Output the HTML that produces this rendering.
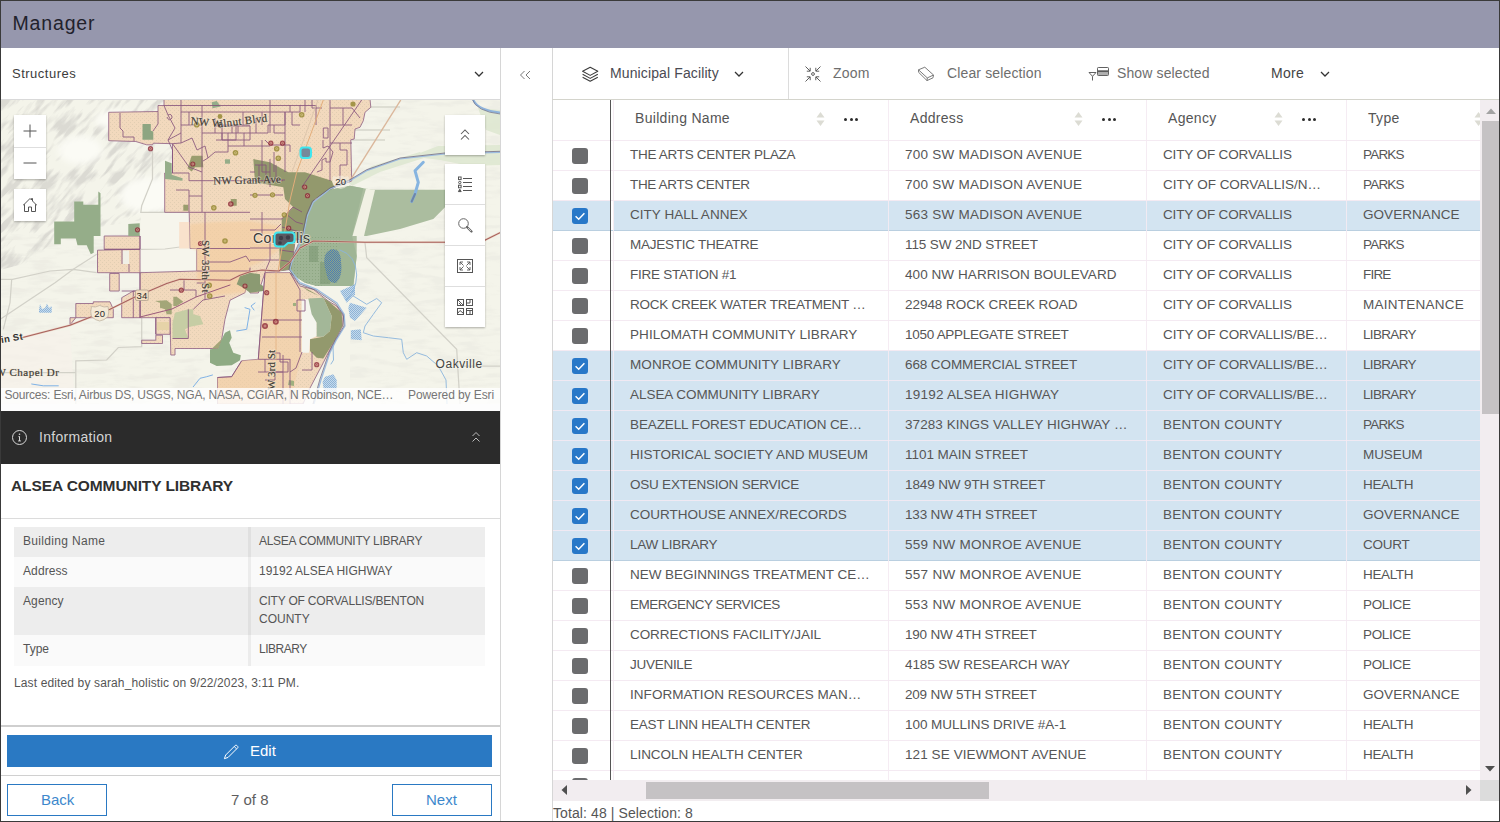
<!DOCTYPE html>
<html><head><meta charset="utf-8"><title>Manager</title>
<style>
*{box-sizing:border-box;margin:0;padding:0}
html,body{width:1500px;height:822px;overflow:hidden;background:#fff}
body{font-family:"Liberation Sans",sans-serif;color:#555;position:relative}
.abs{position:absolute}
.t{position:absolute;white-space:nowrap;line-height:1}
/* header */
#hdr{left:0;top:0;width:1500px;height:48px;background:#9697ad}
/* frame */
#frame{left:0;top:0;width:1500px;height:822px;border:1px solid #3a3a3a;z-index:50;pointer-events:none}
/* table */
#tbl{left:553px;top:100px;width:927px;height:680px;overflow:hidden}
.row{position:absolute;left:553px;width:927px;height:30px;border-bottom:1px solid #f4eaf2}
.row i{position:absolute;top:0;height:29px;display:block}
.row.sel .f1{left:0;width:57px;background:#d3e4f1}
.row.sel .f2{left:58px;width:869px;background:#d3e4f1}
.row.sel.gap .f2{left:61px;width:866px}
.row.sel{border-bottom-color:#f0e9f3}
.row.sel.last{border-bottom-color:#bacfe0}
.cb{position:absolute;left:19px;top:7px;width:16px;height:16px;border-radius:3px;background:#6b6c6e}
.cb.on{background:#2878c8}
.cb svg{position:absolute;left:0;top:0}
.c{position:absolute;top:6px;font-size:13.5px;letter-spacing:-0.27px;line-height:15px;white-space:nowrap;color:#565656}
.c1{left:77px}.c2{left:352px}.c3{left:610px}.c4{left:810px}
.vl{position:absolute;top:100px;width:1px;height:680px;background:#f4eaf2;opacity:0.9}
.hd{position:absolute;top:110px;font-size:14px;line-height:16px;color:#555;white-space:nowrap;letter-spacing:0.3px}
.dots{position:absolute;top:118px;width:14px;height:3px}
.dots b{position:absolute;top:0;width:3px;height:3px;border-radius:50%;background:#2b2b2b}
.sort{position:absolute;top:111px;width:9px;height:16px}
.wbox{background:#fff;box-shadow:0 1px 2px rgba(0,0,0,0.3)}
.tb{position:absolute;top:65px;font-size:14px;line-height:16px;white-space:nowrap}
</style></head>
<body>
<div id="hdr" class="abs"></div>
<div class="t" style="left:12.5px;top:14px;font-size:19.5px;letter-spacing:0.85px;color:#22222c">Manager</div>

<!-- LEFT PANEL -->
<div class="t" style="left:12px;top:67px;font-size:13px;letter-spacing:0.5px;color:#3c3c3c">Structures</div>
<svg class="abs" style="left:473px;top:68px" width="12" height="12" viewBox="0 0 12 12"><path d="M2 4 L6 8 L10 4" fill="none" stroke="#333" stroke-width="1.25"/></svg>
<div class="abs" style="left:1px;top:99px;width:499px;height:1px;background:#d9d9d9"></div>
<svg width="499" height="304" viewBox="1 100 499 304" style="position:absolute;left:1px;top:100px;overflow:hidden">
<defs>
<filter id="blur3" x="-20%" y="-20%" width="140%" height="140%"><feGaussianBlur stdDeviation="3"/></filter>
<filter id="blur05" x="-50%" y="-50%" width="200%" height="200%"><feGaussianBlur stdDeviation="0.5"/></filter>
<filter id="blur1" x="-20%" y="-20%" width="140%" height="140%"><feGaussianBlur stdDeviation="1.2"/></filter>
<filter id="hill" x="0" y="0" width="100%" height="100%"><feTurbulence type="fractalNoise" baseFrequency="0.035 0.16" numOctaves="3" seed="4" result="n"/><feColorMatrix in="n" type="matrix" values="0 0 0 0 0.60  0 0 0 0 0.59  0 0 0 0 0.56  4.5 0 0 0 -2.05"/></filter>
<pattern id="dots" width="4" height="4" patternUnits="userSpaceOnUse"><rect x="0" y="0" width="1" height="1" fill="#b3ae92" opacity="0.26"/><rect x="2" y="2" width="1" height="1" fill="#b3ae92" opacity="0.26"/></pattern>
<pattern id="hatch" width="2" height="2" patternUnits="userSpaceOnUse"><rect width="2" height="2" fill="#b5d2ee"/><rect width="1" height="1" fill="#6f9fd0"/><rect x="1" y="1" width="1" height="1" fill="#6f9fd0"/></pattern>
<pattern id="hatch2" width="2" height="2" patternUnits="userSpaceOnUse"><rect width="2" height="2" fill="#8aa58a"/><rect width="1" height="1" fill="#4f7db4"/><rect x="1" y="1" width="1" height="1" fill="#4f7db4"/></pattern>
<pattern id="gdots" width="3" height="3" patternUnits="userSpaceOnUse"><rect width="1" height="1" fill="#7d9873" opacity="0.55"/></pattern>
<clipPath id="hillclip"><path d="M0 99 H200 V150 L175 215 L110 225 L60 235 L30 262 L0 270 Z"/></clipPath>
<g id="pp">
<path d="M108.700 112.300 L158 111.500 L158 105.500 L164 105.500 L164 99 L370 99 L370.800 107.300 L365 112.300 L363.300 120.700 L360 127.300 L355 129 L354.200 139 L350.800 139.800 L351.700 181 L335 187 L313 202 L307 216 L303 236 L295 241 L291.700 269.300 L265 272.700 L258.300 293 L250 293 L250 267.700 L245 292.700 L230 300.200 L225 319.300 L221.700 339.300 L218.300 348.500 L175 348.500 L175 355 L170.800 355 L170 317.700 L140 317.700 L140 272.700 L196.700 271 L196.700 248.500 L190 248.500 L189.200 212.300 L164.700 212.300 L164.700 173 L172.500 173 L172.500 143.700 L153.300 143.200 L152.500 144.800 L146.700 144.800 L135.800 141.500 L108.700 140.700 Z"/>
<path d="M104.200 236 H140 V249.300 H104.200 Z"/>
<path d="M97.500 250.200 L140 249.300 V272.700 H97.500 Z"/>
<path d="M109.700 273.500 H119.200 V291 H109.700 Z"/>
<path d="M121.700 297.700 L133.300 291 H140 V317.700 H121.700 Z"/>
<path d="M75.800 303.500 L93.300 303.500 L93.300 301.800 L110 301.800 L113.300 309.300 L113.300 317.700 L75.800 317.700 L70 325 L70 317.700 L75.800 317.700 Z"/>
<path d="M155.800 317.700 H170 V334.300 H155.800 Z"/>
<path d="M141.700 340.200 H155.800 V335.200 H162.500 V343.500 H141.700 Z"/>
<path d="M217.500 404 L217.500 377.500 L231.700 376.700 L241.700 360.800 L258.300 359.300 L265 272.700 L290 272.700 L300 286 L313.300 289.300 L328.300 301 L336.700 306 L343.300 316 L342.500 326 L333.300 342.700 L323.300 362.700 L310 388 L303 404 Z"/>
</g>
</defs>
<rect x="0" y="99" width="501" height="306" fill="#f4f4ea"/>
<!-- hillshade -->
<g id="hills">
<g clip-path="url(#hillclip)"><g transform="rotate(-48 90 160)"><rect x="-80" y="20" width="340" height="280" filter="url(#hill)" opacity="0.62"/></g></g>
<rect x="350" y="99" width="150" height="305" filter="url(#hill)" opacity="0.12"/>
<rect x="0" y="234" width="260" height="170" filter="url(#hill)" opacity="0.14"/>
<g filter="url(#blur3)" fill="#fbfbf5"><ellipse cx="80" cy="150" rx="22" ry="14"/><ellipse cx="150" cy="195" rx="30" ry="18"/><ellipse cx="115" cy="120" rx="20" ry="10"/></g>
</g>
<!-- pale areas -->
<path d="M140.800 212.300 H189.200 V236 H179 V249 H196 V271 H140.800 Z" fill="#f6f5ec"/>
<path d="M0 335 L70 330 L75 404 L0 404 Z" fill="#f6f1ea" opacity="0.7"/>
<!-- riparian pale green -->
<g fill="#dfe8d2" opacity="0.9">
<path d="M420 153 L438 146 L500 145 L500 165 L470 166 L440 160 L424 158 Z"/>
<path d="M478 108 L500 110 L500 135 L486 130 Z"/>
<path d="M372 166 L420 152 L424 158 L380 172 L352 186 L348 182 Z"/>
</g>
<!-- gray minor roads -->
<g fill="none" stroke="#d2d1c8" stroke-width="1.25">
<path d="M0 319.300 L25 302.700 L55 282.700 L73.300 269.300 L96.700 254.300"/>
<path d="M0 279.300 L12.500 279.300 L50 271 L73.300 269.300 L96.700 272.700"/>
<path d="M11.700 279.300 L10 302.700 L3.300 329.300"/>
<path d="M75.800 404 L75.800 360.800 L106.700 360 L118.300 347.500 L141.700 346.700 V272"/>
<path d="M0 372.700 H75.800"/>
<path d="M152.500 149 L152.500 179 L141.700 205.700 L140.800 212.300 H189"/>
<path d="M140.800 249.300 L165 249 L180 247"/>
<path d="M365 242.700 L366.700 257.700 L456.700 349.300 L460 404"/>
<path d="M460 366 H500"/>
<path d="M362 107 H400 M352 130 H390 M352 140 H385" stroke="#d6d6cc" stroke-width="1.5"/>
</g>
<!-- PEACH city -->
<use href="#pp" fill="#f2d9bd" stroke="#8d5c82" stroke-width="0.8" stroke-linejoin="round"/>
<use href="#pp" fill="url(#dots)"/>
<!-- lighter / darker peach -->
<path d="M179.200 222 H189.200 V248.500 H179.200 Z" fill="#f9e2cc"/>
<path d="M190 224 L215 222 L250 221 L280 226 L279 250 L262 262 L250 266 L246 292 L210 296 L197 280 L197 250 L190 248 Z" fill="#f4cd9f" opacity="0.62" filter="url(#blur1)"/>
<path d="M258.300 359.300 L265 272.700 L290 272.700 L300 286 L302 352 L290 404 L217.500 404 L217.500 377.500 L231.700 376.700 L241.700 360.800 Z" fill="#f3cea4" opacity="0.55"/>
<!-- white notches in peach -->
<path d="M122.500 250.500 H129 V264 H122.500 Z" fill="#f1f0e6"/>
<path d="M305 299.300 L311.700 299.300 L316.700 322.700 L316.700 336 L310 339.300 L309.200 352.700 L301.700 352.700 L301.700 299.300 Z" fill="#f5f5ee"/>
<path d="M250 293 L262.500 292.700 L260 359.300 L250 359.300 L241.700 360.800 L231.700 376.700 L217.500 377.500 L217.500 388 L200 388 L212 372 L222 348.500 L225 319.300 L230 300.200 L245 292.700 Z" fill="#f5f5ee" opacity="0"/>
<!-- GREEN parks -->
<g fill="#95ad89">
<path d="M74.200 201.500 L83.300 201.500 L83.300 204.800 L98.300 204.800 L98.300 191.500 L100.500 193.200 L100.500 236 L93.700 236 L93.700 252.700 L90.800 254.300 L86.700 245.200 L77.500 245.200 L75.800 238.500 L60.800 238.500 L60.800 244.300 L54.200 244.300 L54.200 221.500 L74.200 221.500 Z"/>
<path d="M142.500 124 L150.800 124 L150.800 130.700 L153.300 131.500 L153.300 139.800 L142.500 139.800 Z" fill="#8da581"/>
<path d="M165 160.700 L171.700 163.200 L171.700 174.800 L182.500 178.200 L182.500 180.700 L165 179 Z"/>
<path d="M128.300 224 L139.700 223.200 L139.700 236 L128.300 236 Z"/>
<path d="M211.700 102.300 L216.700 101 L220.800 106.500 L212.500 108.200 Z"/>
<path d="M225 159.300 H230 V163.700 H225 Z"/>
<path d="M230 330.200 L231.700 337.700 L229.200 342.700 L233.300 352.700 L240.800 355.200 L240 360.200 L231.700 365.200 L216.700 366 L210 362.700 L210 349.300 L218.300 348.500 L221.700 339.300 L225 332.700 Z" fill="#8fab84"/>
<path d="M236.700 284.300 L240 276 L250 272.700 L260 274.300 L260 284.300 L263.300 286 L263.300 291 L250 292.700 L243.300 287.700 Z" fill="#8b9a72"/>
</g>
<!-- east big green -->
<path d="M350 185.700 L363.300 188.200 L373.300 189.800 L445 189.800 L445 207.300 L433.300 219 L400 229 L366.700 236 L356.700 236 L356.700 256 L353.300 286 L316.700 286 L305 282.700 L291.700 274.300 L290 267.700 L295 252.700 L303.300 236 L307.500 215.700 L313.300 202.300 L330 189.800 Z" fill="#abbd9f"/>
<path d="M350 185.700 L363.300 188.200 L352 236 L356.700 256 L353.300 286 L316.700 286 L305 282.700 L291.700 274.300 L290 267.700 L295 252.700 L303.300 236 L307.500 215.700 L313.300 202.300 L330 189.800 Z" fill="#9fb595"/>
<path d="M366 188.500 L375 190 L364 236 L352.500 236 Z" fill="#f1f1e4"/>
<path d="M309 246 H318 V262 H309 Z M320 262 H330 V284 H320 Z" fill="#8aa381"/>
<path d="M291.700 274.300 L290 267.700 L295 252.700 L303.300 236 L340 236 L336 284 L316.700 286 L305 282.700 Z" fill="url(#gdots)"/>
<!-- water hatch -->
<path d="M333 249 Q 341 250 341 262 Q 343 276 336 283 Q 328 284 326 272 Q 322 258 327 252 Q 330 249 333 249 Z" fill="url(#hatch2)"/>
<g fill="url(#hatch)" opacity="0.75">
<path d="M340 291 L355 284.300 L355 294.300 L346.700 302.700 Z"/>
<path d="M350 302.700 L366.700 307.700 L355 321 L350 317.700 L348.300 307.700 Z"/>
<path d="M350.800 330.200 L360.800 329.300 L361.700 340.200 L350.800 339.300 Z"/>
<path d="M322.500 381.700 L325 376.700 L333.300 374.200 L336.700 380 L336.700 392 L324.200 392 Z"/>
<path d="M39 310 L40 304 L42 309 L45 308 L47 303.500 L49 308 L51.700 306 L51.700 312.700 L39 312.700 Z"/>
</g>
<!-- olive (green over peach) -->
<g fill="#93996d">
<path d="M253.300 159 L270 162.300 L288.300 172.300 L305 172.300 L331.700 180.700 L335 187.300 L315 199 L308.300 212.300 L305 230.700 L303.300 236 L295 241 L291.700 269.300 L280 271 L279.200 244.300 L281.700 236 L281.700 219 L293.300 207.300 L285 199 L283.300 187.300 L255 182.300 Z"/>
<path d="M191.700 155.700 L202.500 155.700 L203.300 167.300 L195 167.300 L191.700 171.500 L187.500 168.200 Z" fill="#9a9d6e"/>
<path d="M230.800 199 H236.700 V205.700 H230.800 Z M183.300 204.800 H188.300 V210.700 H183.300 Z" fill="#9a9d6e"/>
<path d="M301.700 286 L328.300 301 L341.700 312.700 L342.500 326 L333.300 342.700 L323.300 358.500 L316.700 357.700 L310 351 L310 339.300 L323.300 336.800 L330 331 L331.700 316 L323.300 297.700 L308.300 291 Z"/>
<path d="M155 301 L166.700 300.200 L171.700 304.300 L171.700 314.300 L166.700 314.300 L165 309.300 L160 307.700 L160 302.700 Z" fill="#a3a678"/>
<path d="M173.300 296.800 L176.700 296.800 L183.300 301.800 L176.700 306 L173.300 306 Z" fill="#a3a678"/>
<path d="M221.700 339.300 L218.300 348.500 L212 348.500 Z" fill="#a3a678"/>
</g>
<path d="M308.300 298.500 L323.300 297.700 L331.700 316 L330 331 L323.300 336.800 L316.700 336.800 L316.700 322.700 L311.700 314.300 Z" fill="#a3b798"/>
<path d="M175 312.700 L188.300 309.300 L193.300 309.300 L193.300 314.300 L200 316 L203.300 324.300 L190 326.800 L185 329.300 L188.300 338.500 L172.500 338.500 L172.500 322.700 Z" fill="#c6cda4"/>
<path d="M157 322 H169 V330 H157 Z" fill="#e6d3a8"/>
<path d="M293 303 H296 V306 H293 Z M289 380 L294 381 L294 386 L288 385 Z" fill="#9fb07f"/>
<!-- purple parcel lines -->
<g fill="none" stroke="#84507a" stroke-width="0.9" stroke-linejoin="round" opacity="0.9">
<path d="M164 105.500 H250 M181 99 V143 M181 112 H250 M202 105 V172 M202 133 H250 M172.500 143.700 L189 167 L202 172 V212 M202 180.700 H250 M202 212.300 H250 M205 212 V236 M189.200 212.300 H202"/>
<path d="M120 113 V128 L123 131 V137 L134 137 V141 M158 111.500 V124 L153 131"/>
<path d="M164 105.500 L168 115 Q 172 113 172 118 Q 169 122 167 117 M168 115 L175 128 L168 140 L172.500 150 L172.500 173"/>
<path d="M181 143 L192 138 L197 150 L205 146 L208 158 L203 161 M208 158 L215 152 H228 V146 H250"/>
<path d="M215 118 V133 M215 125 H236 V140 H222 V133 M236 125 H250 M243 112 V125"/>
<path d="M250 105.500 H316 M250 112 H290 M250 133 H268 V125 H285 V112 M270 99 V133 M285 112 V172 M250 146 H262 V159 M250 180.700 H283 M250 195 H283"/>
<path d="M290 105 V112 L300 112 V105 M312 99 V108 H322"/>
<path d="M330 99 V143 H352 M330 108 H352 L360 118 M330 143 V181 M340 143 V150 H347 V165 H340 V181"/>
<path d="M323 140 V148 L328 146 L333 152 L330 162 H326 V158 L322 160 V170 L317 172"/>
<path d="M323.300 128 H328 V138 H323.300 Z"/>
<path d="M361.700 100 L301.700 187.300"/>
<path d="M265 140 L270 145 H290 V152 M262 159 V172 H270 V159 M274 152 V172"/>
<path d="M250 219 H282 M250 230 H275 L281 224 M262 212 V236 M270 236 V260 L265 272 M250 248 H279 M250 260 H279"/>
<path d="M281.700 219 L293 207 L302 212 M286 214 L296 222 L303 224 M282 227 L300 232 M281 236 L301 240 M280 250 L294 252 M280 260 L292 262"/>
<path d="M196.700 248.500 H250 M196.700 271 H250 M205 236 V300 M196.700 283 H205 M205 262 H230 L246 256 L250 262"/>
<path d="M140 272.700 V317.700 M140 291 H121.700 M133.300 291 V317.700 M155.800 317.700 V334.300 M140 249.300 V236 M122 250 V264 M129 264 V272 M104.200 249.300 H140"/>
<path d="M170 290 H196 V297 M184 279 V290 M188.300 309.300 V338.500 M172.500 338.500 H188.300 M193.300 309.300 L203 300 L225 296"/>
<path d="M265 272.700 L258.300 359.300 M258.300 359.300 H290 M263 320 H302 M262 337 H302 M290 272.700 L300 290 V300 M297 300 H305 V311 H297 Z M300 311 V352 M283 355 V404 M258 372 H283 M265 359 V372 M272 353 H280 V362 H288 V372 H275 V380 H265"/>
<path d="M302 352 L296 368 L290 372 M290 359 V404 M312 352 V370 H302"/>
<path d="M217.500 377.500 L231.700 376.700 L241.700 360.800"/>
<path d="M216 126 H232 V133 M222 126 V140 M228 133 V146 M232 126 H250 V140 M238 126 V133 M244 133 V146 M216 140 H250 M256 118 V133 M262 112 V125 M274 125 V133 H285 M262 140 V146 H270 M292 112 V125 H300 M305 99 V112 M316 105 V125 M330 125 H352 M343 108 V125"/>
<path d="M172.500 143.700 L181 143 M181 125 H202 M189 112 V125 M168 140 L181 133 M172.500 173 H189 V180.700 H202 M176 190 H189 V212 M189 196 H202"/>
<path d="M255 165 H266 V180 M259 165 V180 M270 172 V187 M250 172 H255 M276 165 V180 H285"/>
</g>
<!-- orange rail / brown road -->
<path d="M323.300 100 L296.700 172.300 L290 200 L284 236 L278 272" fill="none" stroke="#e3ad7a" stroke-width="1"/>
<path d="M318 100 L292 172" fill="none" stroke="#d9c1a8" stroke-width="0.8"/>
<path d="M400.800 100 L350 180.700" fill="none" stroke="#dbb79b" stroke-width="1.400"/>
<path d="M276 272 V360" fill="none" stroke="#e3ad7a" stroke-width="0.7"/>
<!-- river -->
<g fill="none" stroke-linecap="round" stroke-linejoin="round">
<path d="M473 99 Q 477 110 500 112.500" stroke="#8fb4dc" stroke-width="2"/>
<path d="M472 99 Q 476 111.500 500 114" stroke="#6a6a86" stroke-width="0.7"/>
<path d="M500 152.300 L445 154 L400 159 L366.700 170.700 L350 180.700 L330 189 L313.300 202.300 L307.500 215.700 L303.300 236 L292 262 L290 269.300 L300 282.700 L316.700 289.300 L336.700 302.700 L344.200 314.300 L345 326 L336.700 339.300 L330 352.700 L321 380 L314 404" stroke="#9cbce0" stroke-width="1.250"/>
<path d="M500 151.300 L445 153 L400 158 L366.700 169.700 L350 179.700 L330 188 L312.300 201.300 L306.500 214.700 L302.300 235 L291 261 L289 269.300 L299 283.700 L316 290.300 L335.700 303.700 L343.200 314.300 L344 326 L335.700 339.300 L329 352.700 L320 379 L313 404" stroke="#5e5578" stroke-width="0.8" opacity="0.85"/>
<path d="M423.300 162.300 L415 170.700 L418.300 182.300 L415 194 L411.700 201.500" stroke="#86b4e0" stroke-width="3"/>
<path d="M415 194 L411.700 201.500" stroke="#6f86a8" stroke-width="2"/>
<path d="M353.300 296 L366.700 304.300 L376.700 298.500 L381.700 302.700 L373.300 314.300 L365 326 L363.300 332.700 L373.300 336 L388.300 337.700 L401.700 339.300 L403.300 352.700 L406.700 359.300 L416.700 352.700 L426.700 356 L438.300 366 L446 380 L447 404" stroke="#8ab4dc" stroke-width="0.9"/>
<path d="M245 307.700 L250 309.300 L246.700 329.300 L236.700 331 M193.300 386.700 L200 378.300 L206.700 376.700 L212.500 375 M31.700 384 L43.300 385.800 L58.300 385.800 M255 303 L251 306 L254 310" stroke="#7fb2e6" stroke-width="1"/>
<path d="M340 250 Q 356 255 356.700 275 Q 356 292 346 300 M333 346 L333.500 360 L331 364" stroke="#8ab4dc" stroke-width="0.9"/>
</g>
<!-- highways -->
<g fill="none" stroke-linecap="round" stroke-linejoin="round">
<path d="M21.700 337.700 L70 325.200 L93.300 316 L110 309.300 L133.300 297.700 L166.700 283.500 L180 279.300 L230 280.200 L240 275.200 L250 271.800 L262 270 L279 271 L290 262 L300 248 L313.300 241 L365 242.300 L445 242.300 L483.300 241 L500 232.700" stroke="#e6c9b8" stroke-width="2" opacity="0.8"/>
<path d="M21.700 337.700 L70 325.200 L93.300 316 L110 309.300 L133.300 297.700 L166.700 283.500 L180 279.300 L230 280.200 L240 275.200 L250 271.800 L262 270 L279 271 L290 262 L300 248 L313.300 241 L365 242.300 L445 242.300 L483.300 241 L500 232.700" stroke="#a8605c" stroke-width="1.050"/>
<path d="M140 317 L172 309 L196 297 L230 285" stroke="#9a5a7a" stroke-width="1"/>
</g>
<!-- points -->
<g>
<g fill="#8e2a38" opacity="0.8" filter="url(#blur05)"><circle cx="150.500" cy="148.700" r="2.6"/><circle cx="192.800" cy="164" r="2.6"/><circle cx="230.800" cy="204" r="2.800"/><circle cx="137.500" cy="229.800" r="2.600"/><circle cx="270.800" cy="143.200" r="2.600"/><circle cx="282.500" cy="143.200" r="2.600"/><circle cx="304.700" cy="187" r="2.600"/><circle cx="307.500" cy="195.700" r="2.600"/><circle cx="288.700" cy="228.200" r="2.600"/><circle cx="200.500" cy="243.500" r="2.600"/><circle cx="181.300" cy="290.200" r="2.600"/><circle cx="245" cy="286" r="2.600"/><circle cx="266.700" cy="292.700" r="2.600"/><circle cx="265" cy="326" r="3"/><circle cx="275.800" cy="321.800" r="3"/><circle cx="316.700" cy="364.700" r="2.600"/></g>
<g fill="none" stroke="#f0c9b0" stroke-width="0.7" opacity="0.8"><circle cx="150.500" cy="148.700" r="1"/><circle cx="192.800" cy="164" r="1"/><circle cx="230.800" cy="204" r="1"/><circle cx="137.500" cy="229.800" r="1"/><circle cx="270.800" cy="143.200" r="1"/><circle cx="282.500" cy="143.200" r="1"/><circle cx="304.700" cy="187" r="1"/><circle cx="307.500" cy="195.700" r="1"/><circle cx="288.700" cy="228.200" r="1"/><circle cx="200.500" cy="243.500" r="1"/><circle cx="181.300" cy="290.200" r="1"/><circle cx="245" cy="286" r="1"/><circle cx="266.700" cy="292.700" r="1"/><circle cx="265" cy="326" r="1"/><circle cx="275.800" cy="321.800" r="1"/><circle cx="316.700" cy="364.700" r="1"/></g>
<g fill="#978a36" opacity="0.85" filter="url(#blur05)"><circle cx="196.700" cy="124.800" r="2.800"/><circle cx="235.500" cy="152.800" r="2.800"/><circle cx="213.800" cy="207.800" r="2.800"/><circle cx="220" cy="116.500" r="2.400"/><circle cx="276.700" cy="148.700" r="2.800"/><circle cx="278.300" cy="158.200" r="2.800"/><circle cx="301.700" cy="114.800" r="2.800"/><circle cx="255" cy="195.300" r="2.600"/><circle cx="272.500" cy="194.800" r="2.600"/><circle cx="284.200" cy="214.800" r="2.600"/><circle cx="353" cy="104" r="2.600"/><circle cx="225" cy="241" r="2.800"/><circle cx="209.200" cy="285.200" r="2.800"/><circle cx="209.700" cy="296" r="2.800"/></g>
<g fill="none" stroke="#e9d9a0" stroke-width="0.7" opacity="0.8"><circle cx="196.700" cy="124.800" r="1"/><circle cx="235.500" cy="152.800" r="1"/><circle cx="213.800" cy="207.800" r="1"/><circle cx="276.700" cy="148.700" r="1"/><circle cx="278.300" cy="158.200" r="1"/><circle cx="301.700" cy="114.800" r="1"/><circle cx="255" cy="195.300" r="1"/><circle cx="272.500" cy="194.800" r="1"/><circle cx="284.200" cy="214.800" r="1"/><circle cx="225" cy="241" r="1"/><circle cx="209.200" cy="285.200" r="1"/><circle cx="209.700" cy="296" r="1"/></g>
</g>
<!-- labels -->
<g font-family="Liberation Serif, serif" font-size="11" fill="#3f3d36">
<g stroke="#f4ead8" stroke-width="1.800" stroke-opacity="0.45" fill="none">
<text x="190.500" y="124.500" transform="rotate(5 190 124)" letter-spacing="0.15">NW W</text>
<text x="218.500" y="127.600" transform="rotate(-7 218 127.600)" letter-spacing="0.35">alnut Blvd</text>
<text x="213.300" y="184.500" letter-spacing="0.19" transform="rotate(-1.500 213 184)">NW Grant Ave</text>
<text x="0" y="0" transform="translate(201.500 240) rotate(90)" letter-spacing="0.22">SW 35th St</text>
<text x="0" y="0" transform="translate(274.500 390) rotate(-90)" letter-spacing="0.07">W 3rd St</text>
<text x="-4.500" y="375.500" letter-spacing="0.5">W Chapel Dr</text>
</g>
<g stroke="#3f3d36" stroke-width="0.180">
<text x="190.500" y="124.500" transform="rotate(5 190 124)" letter-spacing="0.15">NW W</text>
<text x="218.500" y="127.600" transform="rotate(-7 218 127.600)" letter-spacing="0.35">alnut Blvd</text>
<text x="213.300" y="184.500" letter-spacing="0.19" transform="rotate(-1.500 213 184)">NW Grant Ave</text>
<text x="0" y="0" transform="translate(201.500 240) rotate(90)" letter-spacing="0.22">SW 35th St</text>
<text x="0" y="0" transform="translate(274.500 390) rotate(-90)" letter-spacing="0.07">W 3rd St</text>
<text x="-4.500" y="375.500" letter-spacing="0.5">W Chapel Dr</text>
</g>
</g>
<g font-family="Liberation Sans, sans-serif" fill="#333" stroke="#f6f4ea" stroke-width="1.8" paint-order="stroke" stroke-opacity="0.6">
<text x="253" y="243.300" font-size="14" letter-spacing="0.42" fill="#3a3a3a">Corvallis</text>
<text x="435.500" y="367.500" font-size="12" letter-spacing="0.57" fill="#444" stroke-width="1.2">Oakville</text>
<text x="1.500" y="343.200" font-size="9.500" font-weight="bold" transform="rotate(-9 0 343)" letter-spacing="0.3">in St</text>
</g>
<!-- shields -->
<g font-family="Liberation Sans, sans-serif" font-size="9.500" fill="#2a2a2a" text-anchor="middle" letter-spacing="0.2">
<rect x="135.500" y="290" width="12.800" height="10.500" rx="1.500" fill="#f3dcc0" stroke="#a89b8a" stroke-width="0.7"/>
<text x="141.900" y="298.700">34</text>
<path d="M91.500 306.500 Q 95 308 99.700 305.500 Q 104.500 308 108 306.500 Q 109.500 312 108 316.500 Q 104 320.500 99.700 321 Q 95.500 320.500 91.500 316.500 Q 90 312 91.500 306.500 Z" fill="#f5ead6" stroke="#b9ae9c" stroke-width="0.7"/>
<text x="99.800" y="317">20</text>
<path d="M333 176 Q 336.500 177.500 340.800 175.500 Q 345 177.500 348.500 176 Q 350 181 348.500 185 Q 345 188.500 340.800 189 Q 336.500 188.500 333 185 Q 331.500 181 333 176 Z" fill="#f6f2e6" stroke="none" opacity="0.55"/>
<text x="340.800" y="185.300">20</text>
</g>
<!-- selection (cyan) -->
<rect x="300.500" y="147.500" width="10.500" height="10.500" rx="3" fill="#76889a" stroke="#3fe6ef" stroke-width="2"/>
<path d="M278 232.500 H291 Q 294.500 232.500 294.500 236 V240 Q 294.500 243 291 243 H288 L284 246.500 H278 Q 274.500 246.500 274.500 243 V236 Q 274.500 232.500 278 232.500 Z" fill="#5a5a62" stroke="#3fe6ef" stroke-width="2" stroke-linejoin="round"/>
<g fill="#3e3e48"><circle cx="281" cy="238" r="2.200"/><circle cx="288" cy="237.500" r="2.200"/><circle cx="280" cy="243" r="1.800"/></g>
</svg>

<!-- map widgets -->
<div class="abs wbox" style="left:14px;top:115px;width:32px;height:64px"></div>
<div class="abs" style="left:14px;top:147px;width:32px;height:1px;background:#dedede"></div>
<svg class="abs" style="left:22px;top:123px" width="16" height="16" viewBox="0 0 16 16"><path d="M8 1.500 V14.500 M1.500 8 H14.500" stroke="#555" stroke-width="1" fill="none"/></svg>
<svg class="abs" style="left:22px;top:155px" width="16" height="16" viewBox="0 0 16 16"><path d="M1.500 8 H14.500" stroke="#555" stroke-width="1" fill="none"/></svg>
<div class="abs wbox" style="left:14px;top:189px;width:32px;height:32px"></div>
<svg class="abs" style="left:22px;top:197px" width="16" height="16" viewBox="0 0 16 16"><path d="M2.500 14.500 V7.500 L1.500 8 L8 1.500 L9.500 3 V1.500 H10.500 V4 L14.500 8 L13.500 7.500 V14.500 H9.500 V10 H6.500 V14.500 Z" stroke="#555" stroke-width="1" fill="none" stroke-linejoin="round"/></svg>
<div class="abs wbox" style="left:445px;top:115px;width:40px;height:40px"></div>
<svg class="abs" style="left:457px;top:127px" width="16" height="16" viewBox="0 0 16 16"><path d="M4 7 L8 3 L12 7 M4 12.500 L8 8.500 L12 12.500" stroke="#5a5a5a" stroke-width="1.05" fill="none"/></svg>
<div class="abs wbox" style="left:445px;top:164px;width:40px;height:163px"></div>
<div class="abs" style="left:445px;top:204px;width:40px;height:1px;background:#dedede"></div>
<div class="abs" style="left:445px;top:245px;width:40px;height:1px;background:#dedede"></div>
<div class="abs" style="left:445px;top:286px;width:40px;height:1px;background:#dedede"></div>
<svg class="abs" style="left:457px;top:176px" width="16" height="17" viewBox="0 0 16 17"><g stroke="#555" stroke-width="1" fill="none"><path d="M6 2.500 H15 M6 6.500 H15 M6 10.500 H15 M6 14.500 H15"/><rect x="1.500" y="1" width="2.600" height="2.600"/><circle cx="2.800" cy="6.500" r="1.200"/><rect x="1.500" y="9.200" width="2.600" height="2.600"/><path d="M1.400 15.600 L2.800 13.200 L4.200 15.600 Z" fill="#555"/></g></svg>
<svg class="abs" style="left:457px;top:217px" width="16" height="16" viewBox="0 0 16 16"><g stroke="#666" fill="none"><circle cx="6.500" cy="6.500" r="4.800" stroke-width="1"/><path d="M10 10 L14.500 14.500" stroke-width="2.200" stroke-linecap="round"/><path d="M11 11 L14 14" stroke="#fff" stroke-width="0.700"/></g></svg>
<svg class="abs" style="left:457px;top:258px" width="16" height="16" viewBox="0 0 16 16"><g stroke="#555" stroke-width="1" fill="none"><rect x="0.500" y="1.500" width="15" height="13"/><path d="M3 7 V4 H6 M3 4 L6.500 7.500 M13 7 V4 H10 M13 4 L9.500 7.500 M3 9 V12 H6 M3 12 L6.500 8.500 M13 9 V12 H10 M13 12 L9.500 8.500" stroke-width="0.900"/></g></svg>
<svg class="abs" style="left:457px;top:299px" width="16" height="16" viewBox="0 0 16 16"><g stroke="#555" stroke-width="1" fill="none"><rect x="0.500" y="0.500" width="6" height="6"/><rect x="9.500" y="0.500" width="6" height="6"/><rect x="0.500" y="9.500" width="6" height="6"/><rect x="9.500" y="9.500" width="6" height="6"/><path d="M1 1 L6 6 M2 4 L4 6 M10 4 H13 V1 M1 14 L3 11.500 L6 14 M10 11.500 H15 M13 11.500 V15"/></g></svg>
<!-- attribution -->
<div class="abs" style="left:1px;top:404px;width:499px;height:7px;background:#fdfdfd"></div>
<div class="abs" style="left:1px;top:388px;width:499px;height:16px;background:rgba(255,255,255,0.8)"></div>
<div class="t" style="left:4.500px;top:389px;font-size:12px;color:#767676;letter-spacing:-0.2px">Sources: Esri, Airbus DS, USGS, NGA, NASA, CGIAR, N Robinson, NCE…</div>
<div class="t" style="left:408px;top:389px;font-size:12px;color:#767676;letter-spacing:-0.09px">Powered by Esri</div>
<div class="abs" style="left:500px;top:48px;width:1px;height:774px;background:#d6d6d6"></div>

<!-- info bar -->
<div class="abs" style="left:1px;top:411px;width:499px;height:53px;background:#2b2b2b"></div>
<svg class="abs" style="left:11px;top:429px" width="17" height="17" viewBox="0 0 17 17"><circle cx="8.5" cy="8.5" r="7" fill="none" stroke="#d8d8d8" stroke-width="1"/><rect x="8" y="7.5" width="1" height="4.5" fill="#d8d8d8"/><rect x="7" y="11.5" width="3" height="0.9" fill="#d8d8d8"/><rect x="7.4" y="7.2" width="1.3" height="0.9" fill="#d8d8d8"/><circle cx="8.5" cy="5.2" r="0.8" fill="#d8d8d8"/></svg>
<div class="t" style="left:39px;top:430px;font-size:14px;letter-spacing:0.3px;color:#d4d4d4">Information</div>
<svg class="abs" style="left:470px;top:430px" width="12" height="14" viewBox="0 0 12 14"><path d="M2.5 6 L6 2.5 L9.5 6 M2.5 11.5 L6 8 L9.5 11.5" fill="none" stroke="#bdbdbd" stroke-width="1"/></svg>

<div class="t" style="left:11px;top:478px;font-size:15.500px;font-weight:bold;letter-spacing:-0.09px;color:#303030">ALSEA COMMUNITY LIBRARY</div>
<div class="abs" style="left:1px;top:518px;width:499px;height:1px;background:#dcdcdc"></div>

<!-- attribute table -->
<div class="abs" style="left:14px;top:527px;width:471px;height:30px;background:#ededed"></div>
<div class="abs" style="left:14px;top:557px;width:471px;height:30px;background:#fafafa"></div>
<div class="abs" style="left:14px;top:587px;width:471px;height:48px;background:#ededed"></div>
<div class="abs" style="left:14px;top:635px;width:471px;height:31px;background:#fafafa"></div>
<div class="abs" style="left:248px;top:527px;width:3px;height:30px;background:#e0e0e0"></div>
<div class="abs" style="left:248px;top:557px;width:3px;height:30px;background:#ececec"></div>
<div class="abs" style="left:248px;top:587px;width:3px;height:48px;background:#e0e0e0"></div>
<div class="abs" style="left:248px;top:635px;width:3px;height:31px;background:#ececec"></div>
<div class="t at" style="left:23px;top:535px;font-size:12px;letter-spacing:0.33px">Building Name</div>
<div class="t at" style="left:23px;top:565px;font-size:12px;letter-spacing:0.1px">Address</div>
<div class="t at" style="left:23px;top:595px;font-size:12px;letter-spacing:0.1px">Agency</div>
<div class="t at" style="left:23px;top:643px;font-size:12px">Type</div>
<div class="t at" style="left:259px;top:535px;font-size:12px;letter-spacing:-0.28px">ALSEA COMMUNITY LIBRARY</div>
<div class="t at" style="left:259px;top:565px;font-size:12px">19192 ALSEA HIGHWAY</div>
<div class="t at" style="left:259px;top:595px;font-size:12px;letter-spacing:-0.2px">CITY OF CORVALLIS/BENTON</div>
<div class="t at" style="left:259px;top:613px;font-size:12px">COUNTY</div>
<div class="t at" style="left:259px;top:643px;font-size:12px;letter-spacing:-0.5px">LIBRARY</div>
<div class="t" style="left:14px;top:677px;font-size:12px;letter-spacing:0.13px">Last edited by sarah_holistic on 9/22/2023, 3:11 PM.</div>

<div class="abs" style="left:1px;top:725px;width:499px;height:2px;background:#cfcfcf"></div>
<div class="abs" style="left:7px;top:735px;width:485px;height:32px;background:#2a79c3"></div>
<svg class="abs" style="left:223px;top:743px" width="17" height="17" viewBox="0 0 17 17"><path d="M1.400 15.700 L2.700 12 L12.300 2.400 a1 1 0 0 1 1.400 0 l1 1 a1 1 0 0 1 0 1.400 L5.100 14.400 Z M11.200 3.500 L13.600 5.900" fill="none" stroke="#fff" stroke-width="1" stroke-linejoin="round"/></svg>
<div class="t" style="left:250px;top:743px;font-size:15px;color:#fff">Edit</div>
<div class="abs" style="left:1px;top:775px;width:499px;height:1px;background:#d0d0d0"></div>
<div class="abs" style="left:7px;top:784px;width:100px;height:32px;border:1px solid #2a79c3"></div>
<div class="abs" style="left:392px;top:784px;width:100px;height:32px;border:1px solid #2a79c3"></div>
<div class="t" style="left:41px;top:792px;font-size:15px;color:#3d88cc">Back</div>
<div class="t" style="left:426px;top:792px;font-size:15px;color:#3d88cc">Next</div>
<div class="t" style="left:231px;top:792px;font-size:15px;color:#5e5e5e">7 of 8</div>

<!-- collapse -->
<svg class="abs" style="left:518px;top:69px" width="14" height="12" viewBox="0 0 14 12"><path d="M6.5 2 L2.5 6 L6.5 10 M12 2 L8 6 L12 10" fill="none" stroke="#7a7a7a" stroke-width="1"/></svg>

<!-- RIGHT PANEL -->
<div class="abs" style="left:552px;top:48px;width:1px;height:774px;background:#d6d6d6"></div>
<div class="abs" style="left:552px;top:99px;width:948px;height:1px;background:#d4d4cc"></div>
<div class="abs" style="left:788px;top:48px;width:1px;height:51px;background:#dcdcdc"></div>

<!-- toolbar -->
<svg class="abs" style="left:581px;top:65px" width="18" height="18" viewBox="0 0 18 18"><path d="M9.200 2.200 L16.800 6.300 L9.200 10.400 L1.600 6.300 Z M1.600 9.300 L9.200 13.400 L16.800 9.300 M1.600 12.200 L9.200 16.300 L16.800 12.200" fill="none" stroke="#3a3a3a" stroke-width="1.05" stroke-linejoin="round"/></svg>
<div class="tb" style="left:610px;color:#4a4a52;letter-spacing:0.12px">Municipal Facility</div>
<svg class="abs" style="left:733px;top:68px" width="12" height="12" viewBox="0 0 12 12"><path d="M2 4 L6 8 L10 4" fill="none" stroke="#333" stroke-width="1.25"/></svg>

<svg class="abs" style="left:804px;top:65px" width="18" height="18" viewBox="0 0 18 18"><g fill="none" stroke="#555" stroke-width="0.95"><path d="M1.500 1.500 L6 6 M2.800 6.200 H6.200 V2.800"/><path d="M16.500 1.500 L12 6 M15.200 6.200 H11.800 V2.800"/><path d="M1.500 16.500 L6 12 M2.800 11.800 H6.200 V15.200"/><path d="M16.500 16.500 L12 12 M15.200 11.800 H11.800 V15.200"/><circle cx="9" cy="9" r="1.400"/></g></svg>
<div class="tb" style="left:833px;color:#6e6e6e;letter-spacing:0.2px">Zoom</div>

<svg class="abs" style="left:917px;top:65px" width="18" height="18" viewBox="0 0 18 18"><g fill="none" stroke="#747474" stroke-width="0.95" stroke-linejoin="round"><path d="M1.500 4.800 L7.800 2.200 L16.500 10 L10.300 12.900 Z"/><path d="M1.500 4.800 L1.600 7.300 L10 15.600 L10.300 12.900"/><path d="M10 15.600 L16 12.800 L16.500 10"/></g></svg>
<div class="tb" style="left:947px;color:#6e6e6e;letter-spacing:0.14px">Clear selection</div>

<svg class="abs" style="left:1088px;top:65px" width="22" height="18" viewBox="1088 65 22 18"><g fill="none" stroke="#5a5a5a" stroke-width="0.95"><rect x="1097.500" y="67.500" width="11" height="8" rx="0.8"/><rect x="1098" y="70.300" width="10" height="2.200" fill="#5a5a5a" stroke="none"/><path d="M1098 74 H1108"/><path d="M1089 72.500 H1096 L1092.500 76.300 Z" fill="#fff"/><path d="M1092.500 76.300 V80.500"/></g></svg>
<div class="tb" style="left:1117px;color:#6e6e6e;letter-spacing:0.12px">Show selected</div>

<div class="tb" style="left:1271px;color:#444;letter-spacing:0.3px">More</div>
<svg class="abs" style="left:1319px;top:68px" width="12" height="12" viewBox="0 0 12 12"><path d="M2 4 L6 8 L10 4" fill="none" stroke="#333" stroke-width="1.25"/></svg>

<!-- grid -->
<div class="abs" style="left:553px;top:140px;width:927px;height:1px;background:#f4eaf2"></div>
<div id="rows" class="abs" style="left:0;top:0;width:1480px;height:780px;overflow:hidden;clip-path:inset(141px 0 0 553px)">
<div class="row" style="top:141px"><i class="f1"></i><i class="f2"></i><span class="cb"></span><span class="c c1" style="letter-spacing:-0.299px">THE ARTS CENTER PLAZA</span><span class="c c2" style="letter-spacing:0.239px">700 SW MADISON AVENUE</span><span class="c c3" style="letter-spacing:-0.145px">CITY OF CORVALLIS</span><span class="c c4" style="letter-spacing:-0.8px">PARKS</span></div>
<div class="row" style="top:171px"><i class="f1"></i><i class="f2"></i><span class="cb"></span><span class="c c1" style="letter-spacing:-0.354px">THE ARTS CENTER</span><span class="c c2" style="letter-spacing:0.239px">700 SW MADISON AVENUE</span><span class="c c3" style="letter-spacing:-0.016px">CITY OF CORVALLIS/N…</span><span class="c c4" style="letter-spacing:-0.8px">PARKS</span></div>
<div class="row sel last gap" style="top:201px"><i class="f1"></i><i class="f2"></i><span class="cb on"><svg width="16" height="16" viewBox="0 0 16 16"><path d="M3.6 8.2 L6.7 11.2 L12.4 5.2" fill="none" stroke="#fff" stroke-width="1.5"/></svg></span><span class="c c1" style="letter-spacing:0.031px">CITY HALL ANNEX</span><span class="c c2" style="letter-spacing:0.239px">563 SW MADISON AVENUE</span><span class="c c3" style="letter-spacing:-0.145px">CITY OF CORVALLIS</span><span class="c c4" style="letter-spacing:0.052px">GOVERNANCE</span></div>
<div class="row" style="top:231px"><i class="f1"></i><i class="f2"></i><span class="cb"></span><span class="c c1" style="letter-spacing:-0.253px">MAJESTIC THEATRE</span><span class="c c2" style="letter-spacing:-0.119px">115 SW 2ND STREET</span><span class="c c3" style="letter-spacing:-0.145px">CITY OF CORVALLIS</span><span class="c c4" style="letter-spacing:-0.8px">PARKS</span></div>
<div class="row" style="top:261px"><i class="f1"></i><i class="f2"></i><span class="cb"></span><span class="c c1" style="letter-spacing:-0.235px">FIRE STATION #1</span><span class="c c2" style="letter-spacing:0.07px">400 NW HARRISON BOULEVARD</span><span class="c c3" style="letter-spacing:-0.145px">CITY OF CORVALLIS</span><span class="c c4" style="letter-spacing:-0.8px">FIRE</span></div>
<div class="row" style="top:291px"><i class="f1"></i><i class="f2"></i><span class="cb"></span><span class="c c1" style="letter-spacing:-0.241px">ROCK CREEK WATER TREATMENT …</span><span class="c c2" style="letter-spacing:-0.041px">22948 ROCK CREEK ROAD</span><span class="c c3" style="letter-spacing:-0.145px">CITY OF CORVALLIS</span><span class="c c4" style="letter-spacing:0.243px">MAINTENANCE</span></div>
<div class="row" style="top:321px"><i class="f1"></i><i class="f2"></i><span class="cb"></span><span class="c c1" style="letter-spacing:0.061px">PHILOMATH COMMUNITY LIBRARY</span><span class="c c2" style="letter-spacing:-0.278px">1050 APPLEGATE STREET</span><span class="c c3" style="letter-spacing:-0.089px">CITY OF CORVALLIS/BE…</span><span class="c c4" style="letter-spacing:-0.673px">LIBRARY</span></div>
<div class="row sel" style="top:351px"><i class="f1"></i><i class="f2"></i><span class="cb on"><svg width="16" height="16" viewBox="0 0 16 16"><path d="M3.6 8.2 L6.7 11.2 L12.4 5.2" fill="none" stroke="#fff" stroke-width="1.5"/></svg></span><span class="c c1" style="letter-spacing:0.087px">MONROE COMMUNITY LIBRARY</span><span class="c c2" style="letter-spacing:-0.105px">668 COMMERCIAL STREET</span><span class="c c3" style="letter-spacing:-0.089px">CITY OF CORVALLIS/BE…</span><span class="c c4" style="letter-spacing:-0.673px">LIBRARY</span></div>
<div class="row sel" style="top:381px"><i class="f1"></i><i class="f2"></i><span class="cb on"><svg width="16" height="16" viewBox="0 0 16 16"><path d="M3.6 8.2 L6.7 11.2 L12.4 5.2" fill="none" stroke="#fff" stroke-width="1.5"/></svg></span><span class="c c1" style="letter-spacing:-0.047px">ALSEA COMMUNITY LIBRARY</span><span class="c c2" style="letter-spacing:0.222px">19192 ALSEA HIGHWAY</span><span class="c c3" style="letter-spacing:-0.089px">CITY OF CORVALLIS/BE…</span><span class="c c4" style="letter-spacing:-0.673px">LIBRARY</span></div>
<div class="row sel" style="top:411px"><i class="f1"></i><i class="f2"></i><span class="cb on"><svg width="16" height="16" viewBox="0 0 16 16"><path d="M3.6 8.2 L6.7 11.2 L12.4 5.2" fill="none" stroke="#fff" stroke-width="1.5"/></svg></span><span class="c c1" style="letter-spacing:-0.124px">BEAZELL FOREST EDUCATION CE…</span><span class="c c2" style="letter-spacing:0.069px">37283 KINGS VALLEY HIGHWAY …</span><span class="c c3" style="letter-spacing:0.202px">BENTON COUNTY</span><span class="c c4" style="letter-spacing:-0.8px">PARKS</span></div>
<div class="row sel" style="top:441px"><i class="f1"></i><i class="f2"></i><span class="cb on"><svg width="16" height="16" viewBox="0 0 16 16"><path d="M3.6 8.2 L6.7 11.2 L12.4 5.2" fill="none" stroke="#fff" stroke-width="1.5"/></svg></span><span class="c c1" style="letter-spacing:-0.008px">HISTORICAL SOCIETY AND MUSEUM</span><span class="c c2" style="letter-spacing:-0.044px">1101 MAIN STREET</span><span class="c c3" style="letter-spacing:0.202px">BENTON COUNTY</span><span class="c c4" style="letter-spacing:-0.08px">MUSEUM</span></div>
<div class="row sel" style="top:471px"><i class="f1"></i><i class="f2"></i><span class="cb on"><svg width="16" height="16" viewBox="0 0 16 16"><path d="M3.6 8.2 L6.7 11.2 L12.4 5.2" fill="none" stroke="#fff" stroke-width="1.5"/></svg></span><span class="c c1" style="letter-spacing:-0.221px">OSU EXTENSION SERVICE</span><span class="c c2" style="letter-spacing:-0.121px">1849 NW 9TH STREET</span><span class="c c3" style="letter-spacing:0.202px">BENTON COUNTY</span><span class="c c4" style="letter-spacing:-0.355px">HEALTH</span></div>
<div class="row sel" style="top:501px"><i class="f1"></i><i class="f2"></i><span class="cb on"><svg width="16" height="16" viewBox="0 0 16 16"><path d="M3.6 8.2 L6.7 11.2 L12.4 5.2" fill="none" stroke="#fff" stroke-width="1.5"/></svg></span><span class="c c1" style="letter-spacing:0.006px">COURTHOUSE ANNEX/RECORDS</span><span class="c c2" style="letter-spacing:-0.172px">133 NW 4TH STREET</span><span class="c c3" style="letter-spacing:0.202px">BENTON COUNTY</span><span class="c c4" style="letter-spacing:0.052px">GOVERNANCE</span></div>
<div class="row sel last" style="top:531px"><i class="f1"></i><i class="f2"></i><span class="cb on"><svg width="16" height="16" viewBox="0 0 16 16"><path d="M3.6 8.2 L6.7 11.2 L12.4 5.2" fill="none" stroke="#fff" stroke-width="1.5"/></svg></span><span class="c c1" style="letter-spacing:-0.265px">LAW LIBRARY</span><span class="c c2" style="letter-spacing:0.289px">559 NW MONROE AVENUE</span><span class="c c3" style="letter-spacing:0.202px">BENTON COUNTY</span><span class="c c4" style="letter-spacing:-0.239px">COURT</span></div>
<div class="row" style="top:561px"><i class="f1"></i><i class="f2"></i><span class="cb"></span><span class="c c1" style="letter-spacing:-0.041px">NEW BEGINNINGS TREATMENT CE…</span><span class="c c2" style="letter-spacing:0.289px">557 NW MONROE AVENUE</span><span class="c c3" style="letter-spacing:0.202px">BENTON COUNTY</span><span class="c c4" style="letter-spacing:-0.355px">HEALTH</span></div>
<div class="row" style="top:591px"><i class="f1"></i><i class="f2"></i><span class="cb"></span><span class="c c1" style="letter-spacing:-0.493px">EMERGENCY SERVICES</span><span class="c c2" style="letter-spacing:0.289px">553 NW MONROE AVENUE</span><span class="c c3" style="letter-spacing:0.202px">BENTON COUNTY</span><span class="c c4" style="letter-spacing:-0.325px">POLICE</span></div>
<div class="row" style="top:621px"><i class="f1"></i><i class="f2"></i><span class="cb"></span><span class="c c1" style="letter-spacing:-0.071px">CORRECTIONS FACILITY/JAIL</span><span class="c c2" style="letter-spacing:-0.203px">190 NW 4TH STREET</span><span class="c c3" style="letter-spacing:0.202px">BENTON COUNTY</span><span class="c c4" style="letter-spacing:-0.325px">POLICE</span></div>
<div class="row" style="top:651px"><i class="f1"></i><i class="f2"></i><span class="cb"></span><span class="c c1" style="letter-spacing:-0.276px">JUVENILE</span><span class="c c2" style="letter-spacing:-0.122px">4185 SW RESEARCH WAY</span><span class="c c3" style="letter-spacing:0.202px">BENTON COUNTY</span><span class="c c4" style="letter-spacing:-0.325px">POLICE</span></div>
<div class="row" style="top:681px"><i class="f1"></i><i class="f2"></i><span class="cb"></span><span class="c c1" style="letter-spacing:0.047px">INFORMATION RESOURCES MAN…</span><span class="c c2" style="letter-spacing:-0.203px">209 NW 5TH STREET</span><span class="c c3" style="letter-spacing:0.202px">BENTON COUNTY</span><span class="c c4" style="letter-spacing:0.052px">GOVERNANCE</span></div>
<div class="row" style="top:711px"><i class="f1"></i><i class="f2"></i><span class="cb"></span><span class="c c1" style="letter-spacing:-0.192px">EAST LINN HEALTH CENTER</span><span class="c c2" style="letter-spacing:-0.041px">100 MULLINS DRIVE #A-1</span><span class="c c3" style="letter-spacing:0.202px">BENTON COUNTY</span><span class="c c4" style="letter-spacing:-0.355px">HEALTH</span></div>
<div class="row" style="top:741px"><i class="f1"></i><i class="f2"></i><span class="cb"></span><span class="c c1" style="letter-spacing:-0.055px">LINCOLN HEALTH CENTER</span><span class="c c2" style="letter-spacing:0.086px">121 SE VIEWMONT AVENUE</span><span class="c c3" style="letter-spacing:0.202px">BENTON COUNTY</span><span class="c c4" style="letter-spacing:-0.355px">HEALTH</span></div>
<div class="row" style="top:771px"><i class="f1"></i><i class="f2"></i><span class="cb"></span><span class="c c1" style="letter-spacing:-0.002px">MONROE HEALTH CENTER</span><span class="c c2" style="letter-spacing:-0.17px">610 DRAGON DRIVE</span><span class="c c3" style="letter-spacing:0.202px">BENTON COUNTY</span><span class="c c4" style="letter-spacing:-0.355px">HEALTH</span></div>
</div>
<div class="vl" style="left:613px"></div>
<div class="vl" style="left:888px"></div>
<div class="vl" style="left:1146px"></div>
<div class="vl" style="left:1346px"></div>
<div class="abs" style="left:610px;top:100px;width:1px;height:680px;background:#555"></div>

<div class="hd" style="left:635px">Building Name</div>
<div class="hd" style="left:910px">Address</div>
<div class="hd" style="left:1168px">Agency</div>
<div class="hd" style="left:1368px">Type</div>
<div class="dots" style="left:844px"><b style="left:0"></b><b style="left:5.5px"></b><b style="left:11px"></b></div>
<div class="dots" style="left:1102px"><b style="left:0"></b><b style="left:5.5px"></b><b style="left:11px"></b></div>
<div class="dots" style="left:1302px"><b style="left:0"></b><b style="left:5.5px"></b><b style="left:11px"></b></div>
<svg class="sort" style="left:816px" viewBox="0 0 9 16"><path d="M4.5 1 L8.500 6.5 H0.5 Z M4.5 15 L8.500 9.5 H0.5 Z" fill="#dcdcd4"/></svg>
<svg class="sort" style="left:1074px" viewBox="0 0 9 16"><path d="M4.5 1 L8.500 6.5 H0.5 Z M4.5 15 L8.500 9.5 H0.5 Z" fill="#dcdcd4"/></svg>
<svg class="sort" style="left:1274px" viewBox="0 0 9 16"><path d="M4.5 1 L8.500 6.5 H0.5 Z M4.5 15 L8.500 9.5 H0.5 Z" fill="#dcdcd4"/></svg>
<svg class="sort" style="left:1474px;width:6px" viewBox="0 0 6 16"><path d="M4.5 1 L8.500 6.5 H0.5 Z M4.5 15 L8.500 9.5 H0.5 Z" fill="#dcdcd4"/></svg>

<!-- scrollbars -->
<div class="abs" style="left:1480px;top:100px;width:19px;height:680px;background:#f2edf0"></div>
<div class="abs" style="left:1482px;top:121px;width:17px;height:293px;background:#c5c2c4"></div>
<svg class="abs" style="left:1486px;top:108px" width="10" height="6" viewBox="0 0 10 6"><path d="M0 6 L5 0.5 L10 6 Z" fill="#a3a3a3"/></svg>
<svg class="abs" style="left:1485px;top:766px" width="10" height="6" viewBox="0 0 10 6"><path d="M0 0 L5 5.5 L10 0 Z" fill="#505050"/></svg>
<div class="abs" style="left:553px;top:780px;width:927px;height:21px;background:#f2edf0"></div>
<div class="abs" style="left:1480px;top:780px;width:19px;height:21px;background:#dcdcdc"></div>
<div class="abs" style="left:646px;top:782px;width:343px;height:17px;background:#c5c2c4"></div>
<svg class="abs" style="left:561px;top:785px" width="6" height="10" viewBox="0 0 6 10"><path d="M6 0 L0.5 5 L6 10 Z" fill="#505050"/></svg>
<svg class="abs" style="left:1466px;top:785px" width="6" height="10" viewBox="0 0 6 10"><path d="M0 0 L5.5 5 L0 10 Z" fill="#505050"/></svg>

<div class="t" style="left:553px;top:806px;font-size:14px;color:#555;letter-spacing:0.1px">Total: 48 | Selection: 8</div>

<div id="frame" class="abs"></div>
</body></html>
